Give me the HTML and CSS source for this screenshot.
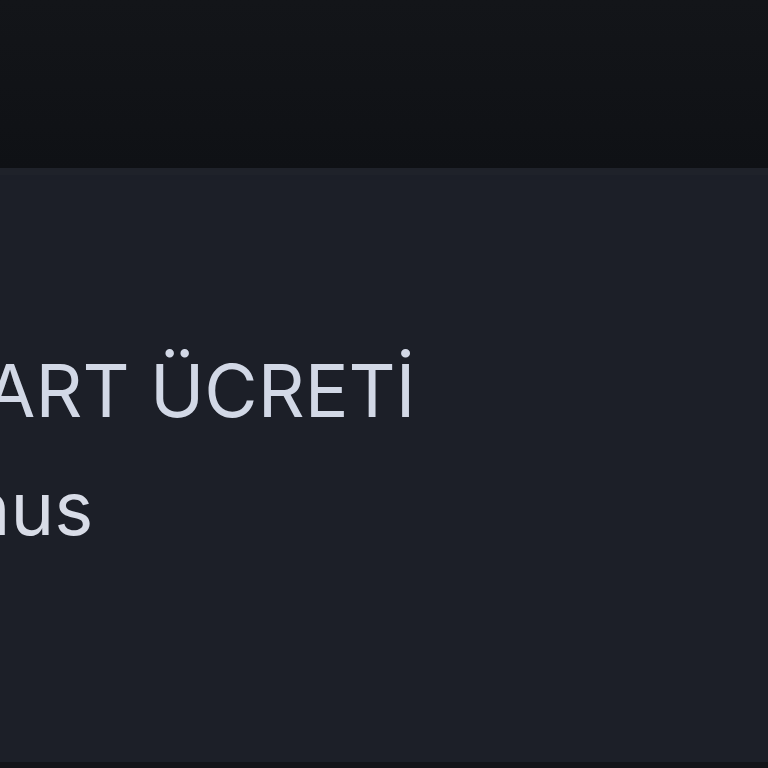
FILE: index.html
```html
<!DOCTYPE html>
<html lang="tr">
<head>
<meta charset="utf-8">
<link rel="stylesheet" href="styles.css">
</head>
<body>
<div class="page">
  <header class="topbar"></header>
  <main class="panel">
    <div class="content">
      <div class="title">KART ÜCRETİ</div>
      <div class="sub">Bonus</div>
    </div>
  </main>
  <footer class="bottom"></footer>
</div>
</body>
</html>
```
FILE: styles.css
```css
html, body {
  margin: 0;
  padding: 0;
  background: #15171c;
  overflow: hidden;
}
.page {
  width: 768px;
  height: 768px;
  display: flex;
  flex-direction: column;
  font-family: Inter, "Noto Sans", sans-serif;
}
.topbar {
  height: 168px;
  background: linear-gradient(#131519, #0f1115);
  flex: none;
}
.panel {
  flex: 1;
  background: #1c1f28;
  border-top: 7px solid #1f222a;
  overflow: hidden;
}
.bottom {
  height: 6px;
  background: #131419;
  flex: none;
}
.content {
  padding-top: 179px;
  margin-left: -64px;
  white-space: nowrap;
}
.title {
  font-size: 73px;
  line-height: 1;
  color: #d2d8e6;
}
.sub {
  font-size: 74px;
  line-height: 1;
  color: #d8dce7;
  margin-top: 44px;
  margin-left: -62px;
}
```
